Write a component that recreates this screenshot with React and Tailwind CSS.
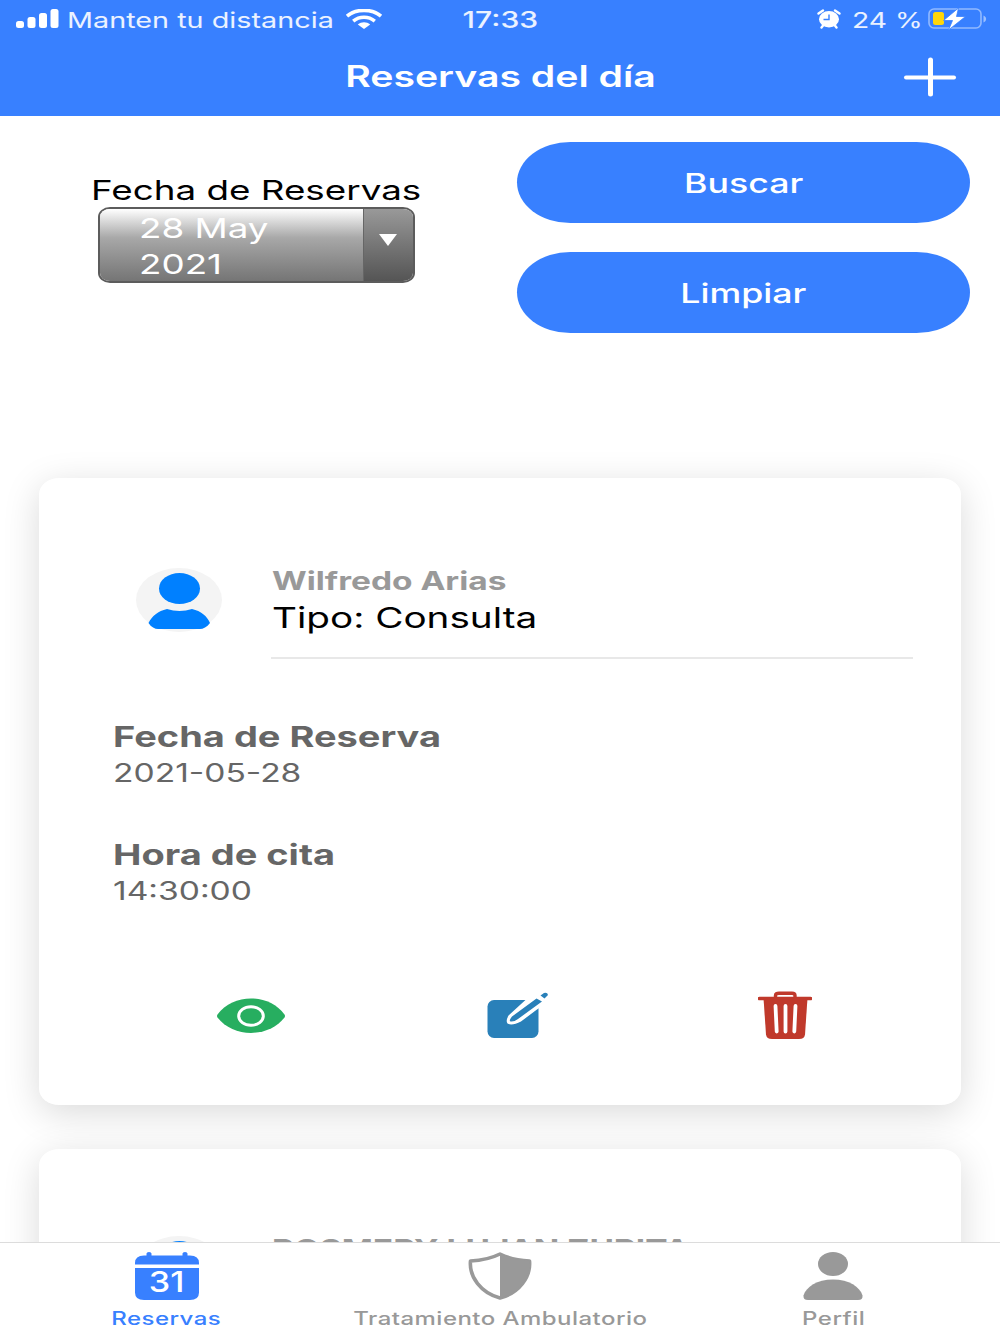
import React from 'react'

const reservas = [
    { id: 1, nombre: 'Wilfredo Arias', tipo: 'Consulta', fecha: '2021-05-28', hora: '14:30:00' },
    { id: 2, nombre: 'ROSMERY LUJAN ZURITA', tipo: 'Consulta', fecha: '2021-05-28', hora: '15:00:00' },
];

// wide text, grows from the left edge
const Left = ({ className = '', children }) => (
    <span className={`block w-max origin-left scale-x-[1.333] whitespace-nowrap ${className}`}>{children}</span>
);

// wide text, grows from its middle
const Mid = ({ className = '', children }) => (
    <span className={`block w-max origin-center scale-x-[1.333] whitespace-nowrap ${className}`}>{children}</span>
);

const StatusBar = () => (
    <div className="flex h-[38px] items-center text-[21.6px] leading-[38px] text-white/90">
        <svg className="ml-[16px] h-[20px] w-[43px] shrink-0" viewBox="0 0 43 20" fill="white">
            <rect x="0" y="12" width="8" height="7" rx="2.5" />
            <rect x="11.5" y="8" width="8" height="11" rx="2.5" />
            <rect x="23" y="4" width="8" height="15" rx="2.5" />
            <rect x="34.5" y="0" width="8" height="19" rx="2.5" />
        </svg>
        <div className="ml-[8px] w-[278px]">
            <Left className="pt-px">Manten tu distancia</Left>
        </div>
        <svg className="h-[20px] w-[38px] shrink-0" viewBox="0 0 38 20" fill="none" stroke="white">
            <path d="M2 7.2C11 -0.6 27 -0.6 36 7.2" strokeWidth="3.6" />
            <path d="M8.2 12.2C14.5 7 23.5 7 29.8 12.2" strokeWidth="3.6" />
            <path d="M12.8 15.6C16.5 12.6 21.5 12.6 25.2 15.6L19 20Z" fill="white" stroke="none" />
        </svg>
        <div className="ml-[56px] flex w-[122px] justify-center">
            <Mid className="pt-px text-[22.6px] font-medium">17:33</Mid>
        </div>
        <svg className="ml-[256px] h-[20px] w-[24px] shrink-0" viewBox="0 0 24 20">
            <path d="M1.5 4.5L6 1.5M22.5 4.5L18 1.5M4.5 18.5L6.5 16M19.5 18.5L17.5 16" stroke="white" strokeWidth="2.4" strokeLinecap="round" />
            <ellipse cx="12" cy="10.2" rx="10" ry="8.2" fill="white" />
            <path d="M12 5.5V10.5H6.5" fill="none" stroke="#3880ff" strokeWidth="1.4" />
        </svg>
        <div className="ml-[11px] w-[76px]">
            <Left className="pt-px text-[21.2px]">24 %</Left>
        </div>
        <svg className="h-[24px] w-[60px] shrink-0" viewBox="0 0 60 24">
            <rect x="1" y="2" width="52" height="19" rx="5" fill="none" stroke="white" strokeOpacity="0.45" strokeWidth="1.6" />
            <path d="M55.5 8.5C59 10 59 14 55.5 15.5Z" fill="white" fillOpacity="0.5" />
            <rect x="5" y="5" width="11" height="13" rx="2.5" fill="#ffd60a" />
            <path d="M30.5 1L15.500 13.5H24.5L20.5 23L37.5 9.5H28.5Z" fill="white" stroke="#3880ff" strokeWidth="0.8" />
        </svg>
    </div>
);

const Avatar = () => (
    <svg className="h-[64px] w-[86px] shrink-0" viewBox="0 0 86 64">
        <ellipse cx="43" cy="32" rx="43" ry="32" fill="#f4f4f4" />
        <ellipse cx="43.5" cy="20.5" rx="20.5" ry="15.5" fill="#0080ff" />
        <path d="M31 41C39 43.5 48 43.5 56 41C65 43 71 48 74 55C71 59 67 61 64 61H22C19 61 15 59 12.5 55C16 48 22 43 31 41Z" fill="#0080ff" />
    </svg>
);

const EyeIcon = () => (
    <svg className="h-[36px] w-[70px]" viewBox="0 0 70 36">
        <path d="M1.5 16.5C17 -5 53 -5 68.5 16.5Q69.5 18 68.5 19.5C53 40 17 40 1.5 19.5Q0.5 18 1.5 16.5Z" fill="#27ae60" />
        <ellipse cx="35" cy="18" rx="12.3" ry="9.3" fill="none" stroke="white" strokeWidth="3" />
    </svg>
);

const EditIcon = () => (
    <svg className="h-[48px] w-[62px]" viewBox="0 0 62 48">
        <rect x="0.5" y="8" width="51" height="38" rx="6.5" fill="#2980b9" />
        <path d="M39 7.5H53V15.500L50 17.500L34 29.500Q25 34 20.500 31.500Q18.500 29 21.500 23.500Z" fill="white" />
        <path d="M49.500 6.500L25 24.500Q21.500 29 23.500 29.500Q27 30 31 27L55 9.500Z" fill="#2980b9" />
        <path d="M53.500 3.500L57 1Q60.500 0.200 61 3L57.500 6.500Z" fill="#2980b9" />
    </svg>
);

const TrashIcon = () => (
    <svg className="h-[50px] w-[54px]" viewBox="0 0 54 50">
        <path d="M1.5 7.5H52.5" stroke="#c0392b" strokeWidth="3.6" strokeLinecap="round" />
        <path d="M17.5 7.5V4.5Q17.5 2.2 21 2.2H34Q37 2.2 37 4.5V7.5" fill="none" stroke="#c0392b" strokeWidth="3.4" />
        <path d="M5.5 7H49.5L47 43.5Q46.5 48 41 48H14Q8.500 48 8 43.5Z" fill="#c0392b" />
        <path d="M17.5 15L18.7 40.5M27.5 15V40.5M37.5 15L36.3 40.5" stroke="white" strokeWidth="3.8" strokeLinecap="round" />
    </svg>
);

const Filtro = () => (
    <div className="flex h-[362px] shrink-0 pt-[26px]">
        <div className="w-[517px] pl-[91px] pt-[30px]">
            <Left className="pt-px text-[27.6px] leading-[34px] text-black">Fecha de Reservas</Left>
            <div className="ml-[7px] flex h-[76px] w-[317px] overflow-hidden rounded-[12px/10px] border-2 border-[#5c5c5c]">
                <div className="flex-1 bg-linear-to-b from-white via-[#a8a8a8] via-40% to-[#757575] pl-[39px] pt-px text-[27.6px] leading-[36px] text-white">
                    <Left>28 May</Left>
                    <Left>2021</Left>
                </div>
                <div className="flex w-[50px] justify-center border-l border-[#666] bg-linear-to-b from-[#999] to-[#555] pr-[2px] pt-[25px]">
                    <svg className="h-[12px] w-[18px]" viewBox="0 0 18 12">
                        <path d="M0 0H18L9 12Z" fill="white" />
                    </svg>
                </div>
            </div>
        </div>
        <div className="flex w-[453px] flex-col gap-[29px]">
            {['Buscar', 'Limpiar'].map((texto) => (
                <button key={texto} className="flex h-[81px] w-full items-center justify-center rounded-[54px/41px] bg-[#3880ff] text-[26.8px] font-medium leading-[36px] text-white">
                    <Mid className="pt-px">{texto}</Mid>
                </button>
            ))}
        </div>
    </div>
);

const Reserva = ({ item, primera }) => (
    <div className="mx-[39px] mb-[44px] h-[627px] shrink-0 rounded-[20px/16px] bg-white shadow-[0_8px_36px_rgba(0,0,0,0.15)]">
        <div className={`flex pl-[97px] ${primera ? 'pt-[85px]' : 'pt-[82px]'}`}>
            <div className="w-[135px] pt-[5px]">
                <Avatar />
            </div>
            <div className="h-[96px] w-[642px] border-b-2 border-[#e8e8e8]">
                <Left className="ml-px text-[25.1px] font-bold leading-[36px] text-[#999]">{item.nombre}</Left>
                <Left className="ml-px text-[29px] leading-[38px] text-black">Tipo: {item.tipo}</Left>
            </div>
        </div>
        <div className="pl-[74px] pt-[60px] text-[25.2px] leading-[36px] text-[#666]">
            <Left className="text-[28.5px] font-bold">Fecha de Reserva</Left>
            <Left>{item.fecha}</Left>
            <Left className="mt-[46px] text-[28.5px] font-bold">Hora de cita</Left>
            <Left>{item.hora}</Left>
        </div>
        <div className="mt-[82px] flex h-[50px] items-center pl-[177px]">
            <EyeIcon />
            <div className="ml-[201px] mr-[209px]">
                <EditIcon />
            </div>
            <TrashIcon />
        </div>
    </div>
);

const Tab = ({ label, className, children }) => (
    <div className={`flex flex-1 flex-col items-center pt-[9px] ${className}`}>
        {children}
        <Mid className="mt-[6px] pt-px text-[18px] font-medium leading-[24px] tracking-[0.35px]">{label}</Mid>
    </div>
);

const Tabs = () => (
    <div className="z-10 flex h-[92px] shrink-0 border-t border-[#dcdcdc] bg-white">
        <Tab label="Reservas" className="text-[#3880ff]">
            <div className="relative h-[48px] w-[66px]">
                <svg className="h-[48px] w-[66px]" viewBox="0 0 66 48" fill="currentColor">
                    <path d="M1 12.5V11Q1 3.5 10 3.5H12.5V1.5Q12.5 0 15 0T17.5 1.5V3.5H48.5V1.5Q48.5 0 51 0T53.5 1.5V3.5H56Q65 3.5 65 11V12.5Z" />
                    <path d="M1 16H65V40.5Q65 48 56 48H10Q1 48 1 40.5Z" />
                </svg>
                <span className="absolute inset-x-0 top-[15px] flex justify-center text-[28px] font-medium leading-[30px] text-white">
                    <span className="block scale-x-[1.22]">31</span>
                </span>
            </div>
        </Tab>
        <Tab label="Tratamiento Ambulatorio" className="text-[#999]">
            <svg className="h-[48px] w-[64px]" viewBox="0 0 64 48">
                <path d="M32 2C24 6 13 8.5 2.5 9C1 25 13 41 32 46C51 41 63 25 61.5 9C51 8.5 40 6 32 2Z" fill="white" stroke="currentColor" strokeWidth="3.6" strokeLinejoin="round" />
                <path d="M32 2C40 6 51 8.5 61.5 9C63 25 51 41 32 46Z" fill="currentColor" />
            </svg>
        </Tab>
        <Tab label="Perfil" className="text-[#999]">
            <svg className="h-[48px] w-[60px]" viewBox="0 0 60 48" fill="currentColor">
                <ellipse cx="30" cy="12" rx="15" ry="12" />
                <path d="M30 27.5C46 27.5 57 35 59.5 43.5Q60 48 55 48H5Q0 48 0.5 43.5C3 35 14 27.5 30 27.5Z" />
            </svg>
        </Tab>
    </div>
);

const App = () => {
    return (
        <div className="flex h-[1334px] w-[1000px] flex-col overflow-hidden bg-white font-[Inter,sans-serif]">
            <header className="h-[116px] shrink-0 bg-[#3880ff] text-white">
                <StatusBar />
                <div className="grid h-[78px] grid-cols-[1fr_auto_1fr] items-center">
                    <div />
                    <Mid className="text-[29.4px] font-semibold leading-[36px]">Reservas del día</Mid>
                    <svg className="mr-[43px] h-[42px] w-[54px] justify-self-end" viewBox="0 0 54 42" stroke="white" strokeLinecap="round">
                        <path d="M3 21.5H51" strokeWidth="4" />
                        <path d="M27.5 4V38" strokeWidth="5" />
                    </svg>
                </div>
            </header>
            <main className="flex min-h-0 flex-1 flex-col overflow-hidden">
                <Filtro />
                {reservas.map((item, index) => (
                    <Reserva key={item.id} item={item} primera={index === 0} />
                ))}
            </main>
            <Tabs />
        </div>
    )
}

export default App;
